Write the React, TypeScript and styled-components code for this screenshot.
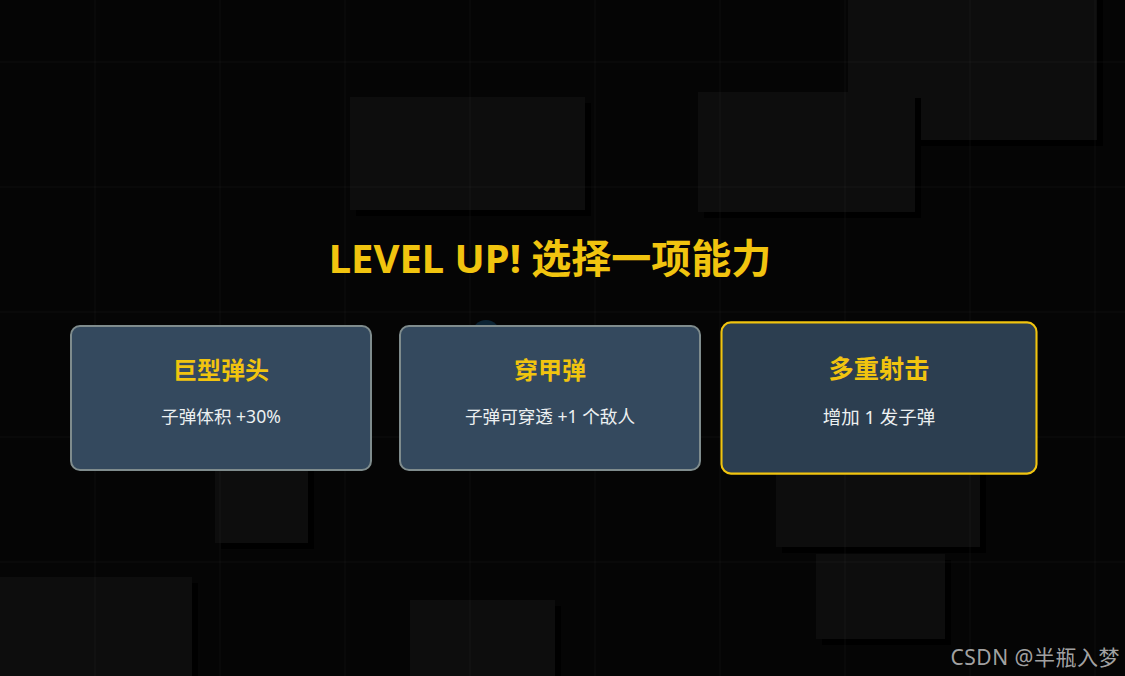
import React from 'react';
import styled, { createGlobalStyle } from 'styled-components';

const GlobalStyle = createGlobalStyle`
    html, body {
        margin: 0;
        padding: 0;
        background: #050505;
        overflow: hidden;
    }
    * {
        box-sizing: border-box;
    }
`;

const FONT = `"Noto Sans", "Noto Sans CJK SC", sans-serif`;

const Stage = styled.div`
    position: relative;
    width: 100vw;
    height: 100vh;
    background: #050505;
    font-family: ${FONT};
    overflow: hidden;
`;

const Canvas = styled.svg`
    position: absolute;
    inset: 0;
    display: block;
`;

const Overlay = styled.div`
    position: absolute;
    inset: 0;
    display: flex;
    flex-direction: column;
    align-items: center;
    padding: 234px 25px 0 0;
`;

const Title = styled.h1`
    margin: 0 0 43px;
    font-size: 40px;
    line-height: 48px;
    font-weight: 700;
    color: #f1c40f;
`;

const CardRow = styled.div`
    display: flex;
    gap: 27px;
`;

const Card = styled.div<{ $active?: boolean }>`
    width: 302px;
    height: 146px;
    padding-top: 27px;
    display: flex;
    flex-direction: column;
    align-items: center;
    background: ${(p) => (p.$active ? '#2c3e50' : '#34495e')};
    border: 2px solid ${(p) => (p.$active ? '#f1c40f' : '#7f8c8d')};
    border-radius: 10px;
    transform: ${(p) => (p.$active ? 'scale(1.05)' : 'none')};
    cursor: pointer;
`;

const CardTitle = styled.h3`
    margin: 0 0 17px;
    font-size: 24px;
    line-height: 32px;
    font-weight: 700;
    color: #f1c40f;
`;

const CardDesc = styled.p`
    margin: 0;
    font-size: 17.6px;
    line-height: 26px;
    color: #ecf0f1;
`;

const Watermark = styled.div`
    position: absolute;
    right: 5px;
    bottom: 5px;
    font-family: ${FONT};
    font-size: 21px;
    color: rgba(205, 205, 205, 0.8);
    letter-spacing: 0.5px;
`;

// obstacles on the game canvas (dimmed under the pause overlay)
const blocks = [
    { x: 848, y: -20, w: 249, h: 160 },
    { x: 698, y: 92, w: 217, h: 120 },
    { x: 350, y: 97, w: 235, h: 113 },
    { x: 215, y: 450, w: 93, h: 93 },
    { x: -10, y: 577, w: 202, h: 120 },
    { x: 410, y: 600, w: 145, h: 100 },
    { x: 776, y: 450, w: 204, h: 97 },
    { x: 816, y: 554, w: 129, h: 85 },
];

const upgrades = [
    { name: '巨型弹头', desc: '子弹体积 +30%' },
    { name: '穿甲弹', desc: '子弹可穿透 +1 个敌人' },
    { name: '多重射击', desc: '增加 1 发子弹', active: true },
];

const GameBackdrop = () => {
    const vLines = Array.from({ length: 9 }, (_, i) => 95 + i * 125);
    const hLines = Array.from({ length: 5 }, (_, i) => 62 + i * 125);
    return (
        <Canvas width="1125" height="676" viewBox="0 0 1125 676">
            {blocks.map((b, i) => (
                <g key={i}>
                    <rect x={b.x + 6} y={b.y + 6} width={b.w} height={b.h} fill="#000" />
                    <rect x={b.x} y={b.y} width={b.w} height={b.h} fill="#0d0d0d" />
                </g>
            ))}
            <circle cx="486" cy="334" r="14" fill="#0c2434" />
            {vLines.map((x) => (
                <line key={'v' + x} x1={x} y1="0" x2={x} y2="676" stroke="rgba(255,255,255,0.018)" strokeWidth="2" />
            ))}
            {hLines.map((y) => (
                <line key={'h' + y} x1="0" y1={y} x2="1125" y2={y} stroke="rgba(255,255,255,0.018)" strokeWidth="2" />
            ))}
        </Canvas>
    );
};

export default function App() {
    return (
        <Stage>
            <GlobalStyle />
            <GameBackdrop />
            <Overlay>
                <Title>LEVEL UP! 选择一项能力</Title>
                <CardRow>
                    {upgrades.map((u) => (
                        <Card key={u.name} $active={u.active}>
                            <CardTitle>{u.name}</CardTitle>
                            <CardDesc>{u.desc}</CardDesc>
                        </Card>
                    ))}
                </CardRow>
            </Overlay>
            <Watermark>CSDN @半瓶入梦</Watermark>
        </Stage>
    );
}
